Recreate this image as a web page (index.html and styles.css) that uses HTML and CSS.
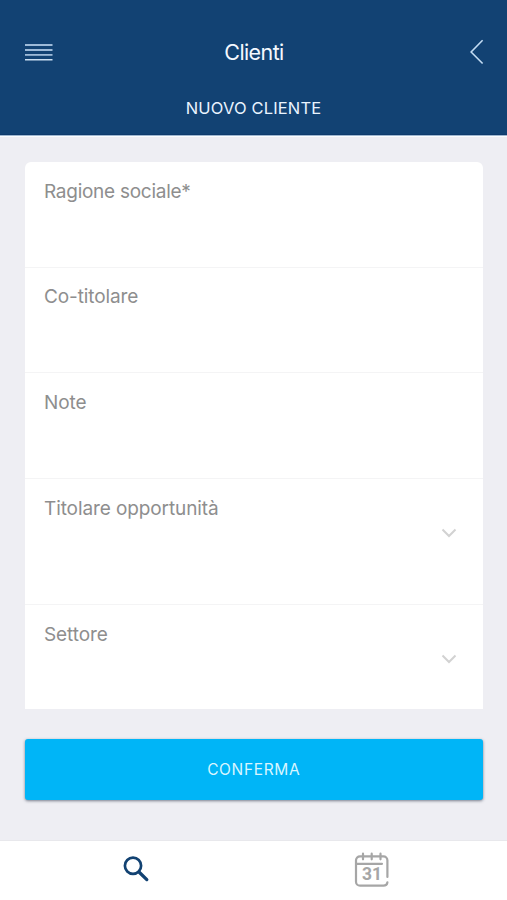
FILE: index.html
```html
<!DOCTYPE html>
<html lang="it">
<head>
<meta charset="utf-8">
<title>Clienti</title>
<link rel="stylesheet" href="styles.css">
</head>
<body>
<header class="header">
  <div class="bar">
    <svg class="menu" width="28" height="18" viewBox="0 0 28 18" fill="#9dbad8">
      <rect x="0" y="0" width="27.5" height="2"/><rect x="0" y="5" width="27.5" height="2"/><rect x="0" y="10" width="27.5" height="1.8"/><rect x="0" y="15" width="27.5" height="1.5" fill="#c9def2"/>
    </svg>
    <h1 class="title">Clienti</h1>
    <svg class="back" width="14" height="26" viewBox="0 0 14 26" fill="none" stroke="#c3dcf3" stroke-width="1.6"><path d="M12.6 1.3 1.1 13 12.6 24.5"/></svg>
  </div>
  <h2 class="subtitle">NUOVO CLIENTE</h2>
</header>
<main class="content">
  <form class="card">
    <div class="field"><label class="tight">Ragione sociale*</label></div>
    <div class="field"><label>Co-titolare</label></div>
    <div class="field"><label>Note</label></div>
    <div class="field tall"><label>Titolare opportunità</label>
      <svg class="chevron" width="16" height="10" viewBox="0 0 16 10"><path d="M1.5 1.5 8 8 14.5 1.5"/></svg></div>
    <div class="field last"><label>Settore</label>
      <svg class="chevron" width="16" height="10" viewBox="0 0 16 10"><path d="M1.5 1.5 8 8 14.5 1.5"/></svg></div>
  </form>
  <button class="confirm" type="button">CONFERMA</button>
</main>
<nav class="tabs">
  <div class="tab">
    <svg class="search" width="28" height="28" viewBox="0 0 28 28" fill="none" stroke="#124272"><circle cx="11" cy="10.7" r="8.1" stroke-width="2.7"/><path d="m17 17 7.8 7.6" stroke-width="3.3" stroke-linecap="round"/></svg>
  </div>
  <div class="tab">
    <svg class="calendar" width="36" height="36" viewBox="0 0 36 36">
      <g fill="none" stroke="#a6a6a6" stroke-width="2.2" stroke-linecap="round" stroke-linejoin="round"><path d="M33.4 25V8.3a4 4 0 0 0-4-4H6a4 4 0 0 0-4 4v21.4a4 4 0 0 0 4 4h23.4q3.6 0 4-3.4M2 11.8h26M9 1.7v5.6M17.7 1.7v5.6M26.5 1.7v5.6"/></g>
      <text x="18" y="28.4" text-anchor="middle">31</text>
    </svg>
  </div>
</nav>
</body>
</html>
```
FILE: styles.css
```css
* { box-sizing: border-box; }
body {
  margin: 0;
  width: 507px;
  height: 900px;
  display: flex;
  flex-direction: column;
  overflow: hidden;
  background: #eeeef3;
  font-family: Inter, "Liberation Sans", sans-serif;
}
svg { display: block; }
.header {
  height: 135px;
  flex: none;
  padding-top: 20px;
  background: #124273;
  border-bottom: 1px solid #0e3a6b;
  box-shadow: 0 1px 0 #9fb7d0, 0 2px 0 #fafcfe;
  color: #eaf4ff;
}
.bar {
  display: flex;
  align-items: center;
  justify-content: space-between;
  height: 64px;
  padding: 0 23px 0 25px;
}
.menu { margin-top: 1px; }
.back { margin-top: -1px; }
.title, .subtitle { margin: 0; font-weight: 400; white-space: nowrap; }
.title { font-size: 21.5px; letter-spacing: -0.6px; margin-right: 15px; color: #f4f9ff; }
.subtitle { font-size: 16.5px; line-height: 24px; margin-top: 12px; text-align: center; letter-spacing: 0.15px; }
.content { flex: 1; padding: 27px 24.5px 0 25px; }
.card { background: #fff; border-radius: 6px 6px 0 0; height: 546.5px; }
.field {
  position: relative;
  height: 105.7px;
  padding: 17.6px 19px 0;
  border-bottom: 1.5px solid #f4f4f5;
}
.field label { display: block; color: #8e8e8e; font-size: 19px; line-height: 24px; letter-spacing: -0.1px; white-space: nowrap; }
.field .tight { letter-spacing: -0.27px; }
.tall { height: 126px; }
.last { height: 103.4px; border-bottom: 0; }
.chevron { position: absolute; right: 25.5px; top: 49px; fill: none; stroke: #d2d2d2; stroke-width: 2; }
.confirm {
  display: block;
  width: 100%;
  height: 61px;
  margin-top: 30.5px;
  padding: 0;
  border: 0;
  border-radius: 3px;
  background: #00b5f7;
  box-shadow: 0 1px 3px rgba(40, 50, 70, .6);
  color: #d9f5ff;
  font: 400 15.5px/61px Inter, "Liberation Sans", sans-serif;
  letter-spacing: 0.65px;
}
.tabs { display: flex; flex: none; height: 60px; background: #fff; border-top: 1px solid #e8e8ec; }
.tab { flex: 1; display: flex; justify-content: center; padding-top: 11px; }
.search { margin: 3px 0 0 18px; }
.calendar { margin-right: 17px; }
.calendar text { font: 700 17.5px Roboto, "Liberation Sans", sans-serif; fill: #a6a6a6; }
```
